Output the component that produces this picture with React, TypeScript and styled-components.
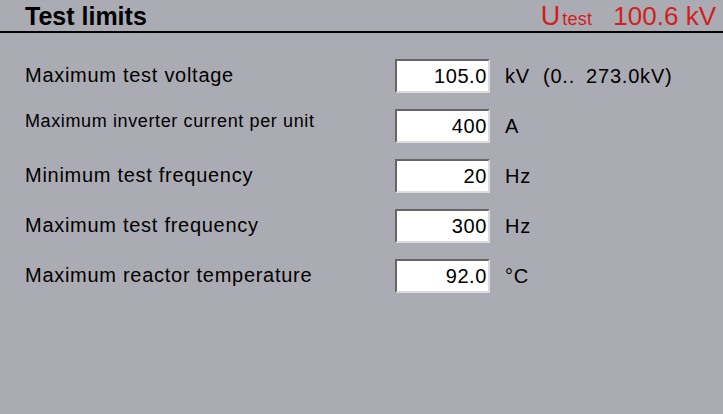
import React from "react";
import styled, { createGlobalStyle } from "styled-components";

const Global = createGlobalStyle`
  html, body { margin: 0; padding: 0; background: #ababb3; }
  body { font-family: Arial, "Liberation Sans", sans-serif; color: #000; }
  #root { width: 723px; height: 414px; }
`;

const Screen = styled.div`
  width: 723px;
  height: 414px;
  background: #ababb3;
  display: flex;
  flex-direction: column;
  overflow: hidden;
`;

const Header = styled.header`
  height: 31px;
  border-bottom: 2px solid #000;
  display: flex;
  align-items: flex-start;
  justify-content: space-between;
  padding: 0 7px 0 25px;
`;

const Title = styled.h1`
  margin: 0;
  font-size: 25px;
  font-weight: bold;
  line-height: 31px;
  padding-top: 1px;
`;

const Reading = styled.div`
  display: flex;
  align-items: baseline;
  color: #d21e1e;
  line-height: 31px;
  padding-top: 1px;
`;

const Symbol = styled.span`
  font-size: 27px;
`;

const Sub = styled.span`
  font-size: 18px;
  margin-left: 2px;
  letter-spacing: 0.3px;
`;

const Value = styled.span`
  font-size: 26px;
  margin-left: 21px;
`;

const Form = styled.div`
  padding: 26px 0 0 25px;
  display: flex;
  flex-direction: column;
  gap: 16px;
`;

const Row = styled.div`
  display: grid;
  grid-template-columns: 370px 95px auto;
  grid-template-rows: 34px;
  align-items: start;
`;

const Label = styled.div<{ $small?: boolean }>`
  font-size: ${(p) => (p.$small ? "18px" : "20px")};
  line-height: ${(p) => (p.$small ? "21px" : "23px")};
  letter-spacing: ${(p) => (p.$small ? "0.62px" : "0.72px")};
  padding-top: ${(p) => (p.$small ? "2px" : "5px")};
  white-space: nowrap;
`;

const Field = styled.div`
  box-sizing: border-box;
  height: 34px;
  background: #fff;
  border-style: solid;
  border-width: 2px;
  border-color: #666 #dcdcdc #dcdcdc #666;
  font-size: 20px;
  line-height: 31px;
  letter-spacing: 0.6px;
  text-align: right;
  padding: 0 1px 0 0;
`;

const Unit = styled.div`
  height: 34px;
  font-size: 20px;
  line-height: 35px;
  letter-spacing: 0.8px;
  padding-left: 15px;
  white-space: pre;
`;

const Range = styled.span`
  margin-left: 13px;
`;

const RangeMax = styled.span`
  margin-left: 11px;
`;

type Item = { label: string; value: string; unit: string; small?: boolean; range?: [string, string] };

const items: Item[] = [
  { label: "Maximum test voltage", value: "105.0", unit: "kV", range: ["(0..", "273.0kV)"] },
  { label: "Maximum inverter current per unit", value: "400", unit: "A", small: true },
  { label: "Minimum test frequency", value: "20", unit: "Hz" },
  { label: "Maximum test frequency", value: "300", unit: "Hz" },
  { label: "Maximum reactor temperature", value: "92.0", unit: "°C" },
];

export default function App() {
  return (
    <Screen>
      <Global />
      <Header>
        <Title>Test limits</Title>
        <Reading>
          <Symbol>U</Symbol>
          <Sub>test</Sub>
          <Value>100.6 kV</Value>
        </Reading>
      </Header>
      <Form>
        {items.map((it) => (
          <Row key={it.label}>
            <Label $small={it.small}>{it.label}</Label>
            <Field>{it.value}</Field>
            <Unit>
              {it.unit}
              {it.range && (
                <>
                  <Range>{it.range[0]}</Range>
                  <RangeMax>{it.range[1]}</RangeMax>
                </>
              )}
            </Unit>
          </Row>
        ))}
      </Form>
    </Screen>
  );
}
